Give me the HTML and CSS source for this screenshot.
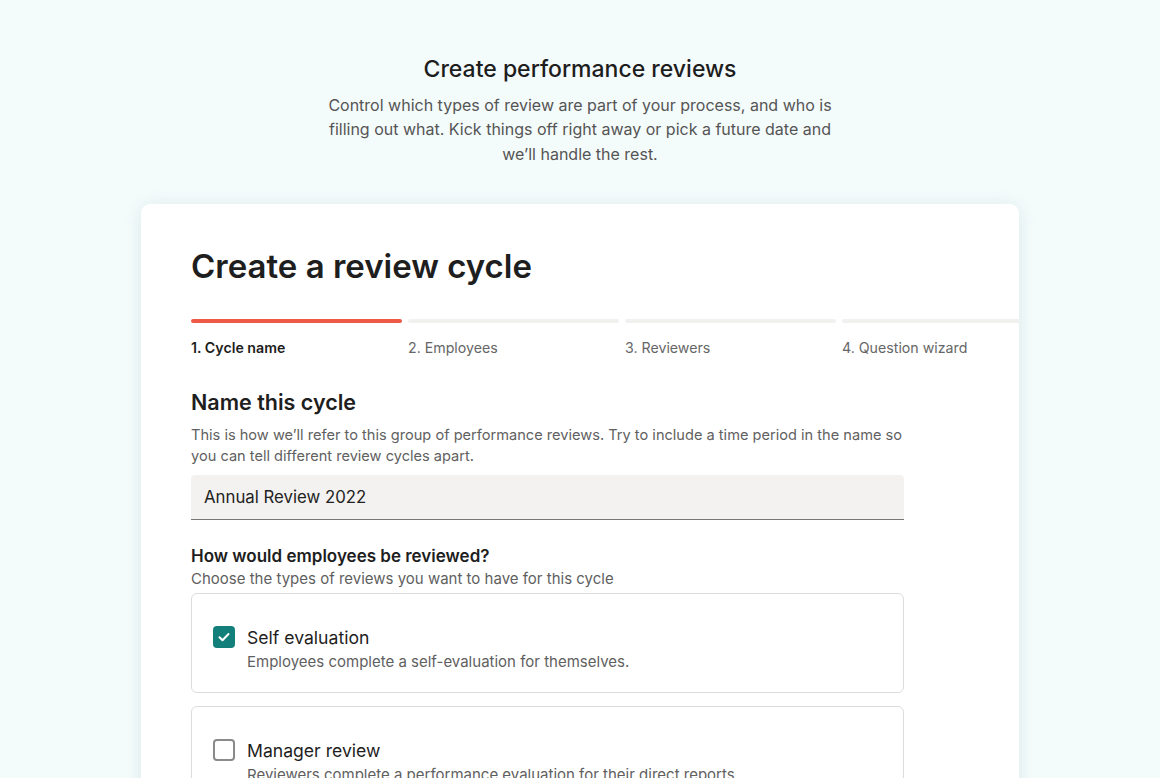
FILE: index.html
```html
<!DOCTYPE html>
<html lang="en">
<head>
<meta charset="utf-8">
<title>Create performance reviews</title>
<link rel="stylesheet" href="styles.css">
</head>
<body>
<main class="page">
  <header class="intro">
    <h1 class="intro-title">Create performance reviews</h1>
    <p class="intro-text">Control which types of review are part of your process, and who is filling out what. Kick things off right away or pick a future date and we’ll handle the rest.</p>
  </header>

  <section class="card">
    <h2 class="card-title">Create a review cycle</h2>

    <ol class="stepper">
      <li class="step active"><span class="step-bar"></span><span class="step-label">1. Cycle name</span></li>
      <li class="step"><span class="step-bar"></span><span class="step-label">2. Employees</span></li>
      <li class="step"><span class="step-bar"></span><span class="step-label">3. Reviewers</span></li>
      <li class="step"><span class="step-bar"></span><span class="step-label">4. Question wizard</span></li>
    </ol>

    <div class="form">
      <h3 class="section-title">Name this cycle</h3>
      <p class="section-help">This is how we’ll refer to this group of performance reviews. Try to include a time period in the name so you can tell different review cycles apart.</p>
      <div class="input">Annual Review 2022</div>

      <h4 class="question">How would employees be reviewed?</h4>
      <p class="question-help">Choose the types of reviews you want to have for this cycle</p>

      <div class="options">
        <label class="option">
          <span class="checkbox checked">
            <svg viewBox="0 0 22 22" width="22" height="22"><path d="M6.5 11.2l3 3 6-6.2" fill="none" stroke="#fff" stroke-width="2" stroke-linecap="round" stroke-linejoin="round"/></svg>
          </span>
          <span class="option-body">
            <span class="option-title">Self evaluation</span>
            <span class="option-desc">Employees complete a self-evaluation for themselves.</span>
          </span>
        </label>
        <label class="option">
          <span class="checkbox"></span>
          <span class="option-body">
            <span class="option-title">Manager review</span>
            <span class="option-desc">Reviewers complete a performance evaluation for their direct reports.</span>
          </span>
        </label>
      </div>
    </div>
  </section>
</main>
</body>
</html>
```

FILE: styles.css
```css
* { box-sizing: border-box; }
html, body { margin: 0; padding: 0; }
body {
  background: #f4fbfb;
  font-family: "Inter", "Noto Sans", sans-serif;
  color: #1f1f1f;
  height: 778px;
  overflow: hidden;
}
.page {
  display: flex;
  flex-direction: column;
  align-items: center;
  padding-top: 55px;
}
.intro { text-align: center; width: 528px; }
.intro-title {
  margin: 0;
  font-size: 23px;
  font-weight: 500;
  line-height: 28px;
  color: #1d1d1d;
}
.intro-text {
  margin: 10px 0 0;
  font-size: 16px;
  line-height: 24.4px;
  color: #555;
}
.card {
  margin-top: 38px;
  width: 878px;
  background: #fff;
  border-radius: 9px;
  box-shadow: 0 2px 18px rgba(160, 190, 190, 0.28);
  padding: 40px 50px 40px;
  overflow: hidden;
  min-height: 700px;
}
.card-title {
  margin: 0;
  font-size: 33px;
  font-weight: 600;
  line-height: 44px;
  color: #1e1e1e;
}
.stepper {
  list-style: none;
  margin: 31px 0 0;
  padding: 0;
  display: flex;
  gap: 6px;
  width: 862px;
}
.step { flex: 0 0 211px; display: flex; flex-direction: column; }
.step-bar {
  height: 4px;
  border-radius: 2px;
  background: #f1f1f0;
}
.step.active .step-bar { background: #ef5a48; }
.step-label {
  margin-top: 15px;
  font-size: 14.2px;
  line-height: 20px;
  color: #666;
}
.step.active .step-label { color: #1e1e1e; font-weight: 600; }

.form { width: 713px; }
.section-title {
  margin: 30px 0 0;
  font-size: 21.5px;
  font-weight: 600;
  line-height: 28px;
  color: #1e1e1e;
}
.section-help {
  margin: 9px 0 0;
  font-size: 14.6px;
  line-height: 21px;
  color: #616161;
}
.input {
  margin-top: 8px;
  height: 45px;
  background: #f3f2f0;
  border-radius: 4px 4px 0 0;
  border-bottom: 1.5px solid #777;
  padding: 0 13px;
  display: flex;
  align-items: center;
  font-size: 16.8px;
  color: #222;
}
.question {
  margin: 25px 0 0;
  font-size: 17px;
  font-weight: 600;
  line-height: 22px;
  color: #1e1e1e;
}
.question-help {
  margin: 1px 0 0;
  font-size: 15px;
  line-height: 21px;
  color: #5f5f5f;
}
.options { margin-top: 4px; display: flex; flex-direction: column; gap: 13px; }
.option {
  display: flex;
  align-items: flex-start;
  gap: 12px;
  border: 1px solid #dcdcdc;
  border-radius: 6px;
  padding: 32px 21px 18px;
  min-height: 100px;
}
.checkbox {
  flex: 0 0 22px;
  width: 22px;
  height: 22px;
  border-radius: 4px;
  border: 2px solid #8a8a8a;
  display: flex;
}
.checkbox svg { margin: -2px; }
.checkbox.checked { background: #137f7b; border-color: #137f7b; }
.option-body { display: flex; flex-direction: column; margin-top: 1px; }
.option-title {
  font-size: 17.6px;
  line-height: 22px;
  color: #1e1e1e;
}
.option-desc {
  margin-top: 3px;
  font-size: 15px;
  line-height: 20px;
  color: #5f5f5f;
}
```
